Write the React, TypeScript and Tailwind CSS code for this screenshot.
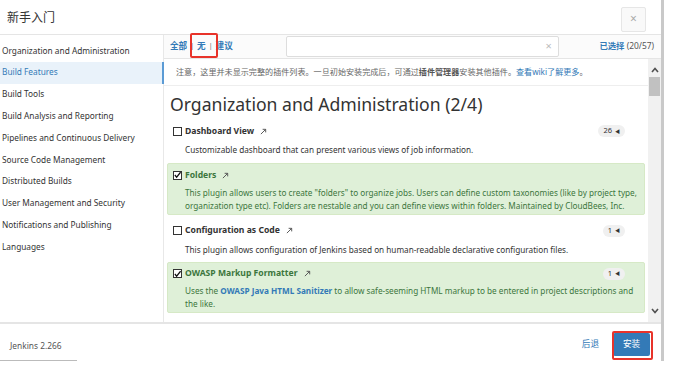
import React from 'react';

const font = { fontFamily: '"Noto Sans", "Noto Sans CJK SC", sans-serif' };

const categories = [
  'Organization and Administration',
  'Build Features',
  'Build Tools',
  'Build Analysis and Reporting',
  'Pipelines and Continuous Delivery',
  'Source Code Management',
  'Distributed Builds',
  'User Management and Security',
  'Notifications and Publishing',
  'Languages',
];

const Arrow = () => (
  <svg width="7" height="7" viewBox="0 0 8 8" className="inline-block ml-[6px] align-middle">
    <path d="M1 7 L6.5 1.5 M3 1.5 H6.5 V5" stroke="#555" strokeWidth="1.1" fill="none" />
  </svg>
);

const Check = ({ on }: { on: boolean }) => (
  <span className="inline-flex w-[9px] h-[9px] border border-[#333] bg-white items-center justify-center mr-[3px]">
    {on && (
      <svg width="8" height="8" viewBox="0 0 8 8">
        <path d="M1 4 L3 6.5 L7.5 0.8" stroke="#111" strokeWidth="1.4" fill="none" />
      </svg>
    )}
  </span>
);

const Badge = ({ n }: { n: string }) => (
  <span className="ml-auto mr-[14px] bg-[#f0f0f0] rounded-[7px] px-[5px] h-[12px] flex items-center text-[7.5px] text-[#333] leading-none">
    {n}
    <span className="ml-[3px] text-[5px]">◀</span>
  </span>
);

type PluginProps = {
  name: string;
  badge?: string;
  selected: boolean;
  children: React.ReactNode;
};

const Plugin = ({ name, badge, selected, children }: PluginProps) => (
  <div
    className={`mx-[3px] rounded-[2px] px-[5px] ${
      selected ? 'bg-[#dff0d8] border border-[#d6e9c6] text-[#3c763d] pt-[3px] pb-[2px]' : 'border border-transparent text-[#333]'
    }`}
  >
    <div className="flex items-center h-[16px]">
      <Check on={selected} />
      <span className={`font-bold text-[8.6px] ${selected ? 'text-[#3c763d]' : 'text-[#333]'}`}>{name}</span>
      <Arrow />
      {badge && <Badge n={badge} />}
    </div>
    <div className={`text-[8.2px] leading-[13px] pl-[12px] ${selected ? 'mt-[2.5px]' : 'mt-[4px]'}`}>{children}</div>
  </div>
);

export default function App() {
  return (
    <div className="w-[675px] h-[370px] bg-white relative overflow-hidden flex" style={font}>
      <div className="w-[661px] h-[362px] flex flex-col bg-white">
        <div className="h-[35px] border-b border-[#e5e5e5] flex items-center justify-between pl-[7px] pr-[15px]">
          <span className="text-[12px] text-[#333] mt-[1px]">新手入门</span>
          <button className="w-[25px] h-[25px] mt-[4px] border border-[#e6e6e6] bg-[#f9f9f9] rounded-[2px] text-[#aaa] text-[12px] leading-none flex items-center justify-center">
            ×
          </button>
        </div>

        <div className="h-[287px] flex">
          <div className="w-[164px] border-r border-[#e8e8e8] pt-[5px]">
            {categories.map((c) => (
              <div
                key={c}
                className={`h-[21.8px] flex items-center pl-[2px] text-[8.3px] ${
                  c === 'Build Features' ? 'bg-[#e9f2fa] text-[#337ab7] border-r-2 border-[#5b9bd5] mr-[-1px]' : 'text-[#333]'
                }`}
              >
                {c}
              </div>
            ))}
          </div>

          <div className="flex-1 flex flex-col min-w-0">
            <div className="h-[24px] border-b border-[#e5e5e5] bg-[#fbfbfb] flex items-center pl-[6px] pr-[7px]">
              <span className="text-[8.6px] font-bold text-[#337ab7]">全部</span>
              <span className="text-[7px] text-[#666] mx-[3px]">|</span>
              <span className="text-[8.6px] font-bold text-[#337ab7]">无</span>
              <span className="text-[7px] text-[#666] mx-[3px]">|</span>
              <span className="text-[8.6px] font-bold text-[#337ab7]">建议</span>
              <div className="ml-[53px] w-[273px] h-[21px] border border-[#ddd] bg-white rounded-[2px] flex items-center justify-end pr-[6px] text-[#bbb] text-[11px]">
                ×
              </div>
              <span className="ml-auto text-[8.4px] text-[#337ab7] font-bold">
                已选择 <span className="font-normal text-[#555]">(20/57)</span>
              </span>
            </div>

            <div className="flex-1 flex min-h-0">
              <div className="flex-1 min-w-0 overflow-hidden">
                <div className="h-[27px] border-b border-[#eee] flex items-center pl-[12px] text-[8.1px] text-[#666] whitespace-nowrap">
                  注意，这里并未显示完整的插件列表。一旦初始安装完成后，可通过<b className="text-[#555]">插件管理器</b>安装其他插件。
                  <span className="text-[#337ab7]">查看wiki了解更多</span>。
                </div>
                <h2 className="text-[17.6px] text-[#333] pl-[6px] h-[36px] flex items-center">
                  Organization and Administration (2/4)
                </h2>
                <Plugin name="Dashboard View" badge="26" selected={false}>
                  Customizable dashboard that can present various views of job information.
                </Plugin>
                <div className="h-[6px]" />
                <Plugin name="Folders" selected>
                  This plugin allows users to create "folders" to organize jobs. Users can define custom taxonomies (like by project type,
                  organization type etc). Folders are nestable and you can define views within folders. Maintained by CloudBees, Inc.
                </Plugin>
                <div className="h-[7px]" />
                <Plugin name="Configuration as Code" badge="1" selected={false}>
                  This plugin allows configuration of Jenkins based on human-readable declarative configuration files.
                </Plugin>
                <div className="h-[5px]" />
                <Plugin name="OWASP Markup Formatter" badge="1" selected>
                  Uses the <span className="font-bold text-[#337ab7]">OWASP Java HTML Sanitizer</span> to allow safe-seeming HTML markup to be entered in project descriptions and
                  the like.
                </Plugin>
              </div>
              <div className="w-[13px] bg-[#f1f1f1] flex flex-col items-center pt-[8px] pb-[8px]">
                <svg width="8" height="6" viewBox="0 0 8 6">
                  <path d="M1 5 L4 1.5 L7 5" stroke="#505050" strokeWidth="1.6" fill="none" />
                </svg>
                <div className="w-[11px] h-[19px] bg-[#c1c1c1] mt-[4px]" />
                <div className="flex-1" />
                <svg width="8" height="6" viewBox="0 0 8 6">
                  <path d="M1 1 L4 4.5 L7 1" stroke="#505050" strokeWidth="1.6" fill="none" />
                </svg>
              </div>
            </div>
          </div>
        </div>

        <div className="flex-1 border-t-2 border-[#e5e5e5] flex items-center pl-[10px] pr-[10px] relative">
          <span className="text-[8.4px] text-[#555] mt-[7px]">Jenkins 2.266</span>
          <span className="ml-auto text-[8.6px] text-[#337ab7] mr-[14px] mt-[2px]">后退</span>
          <button className="w-[37px] h-[23px] mt-[2px] bg-[#337ab7] rounded-[2px] text-white text-[8.6px] mr-[1px]">安装</button>
          <div className="absolute left-0 bottom-[1px] w-[77px] h-px bg-[#bbb]" />
        </div>
      </div>
      <div className="w-[3px] h-[361px] bg-[#c9c9c9]" />

      <div className="absolute left-[190px] top-[33px] w-[28px] h-[25px] border-2 border-[#e8332a] rounded-[2px]" />
      <div className="absolute left-[612px] top-[331px] w-[41px] h-[29px] border-2 border-[#e8332a] rounded-[2px]" />
    </div>
  );
}
